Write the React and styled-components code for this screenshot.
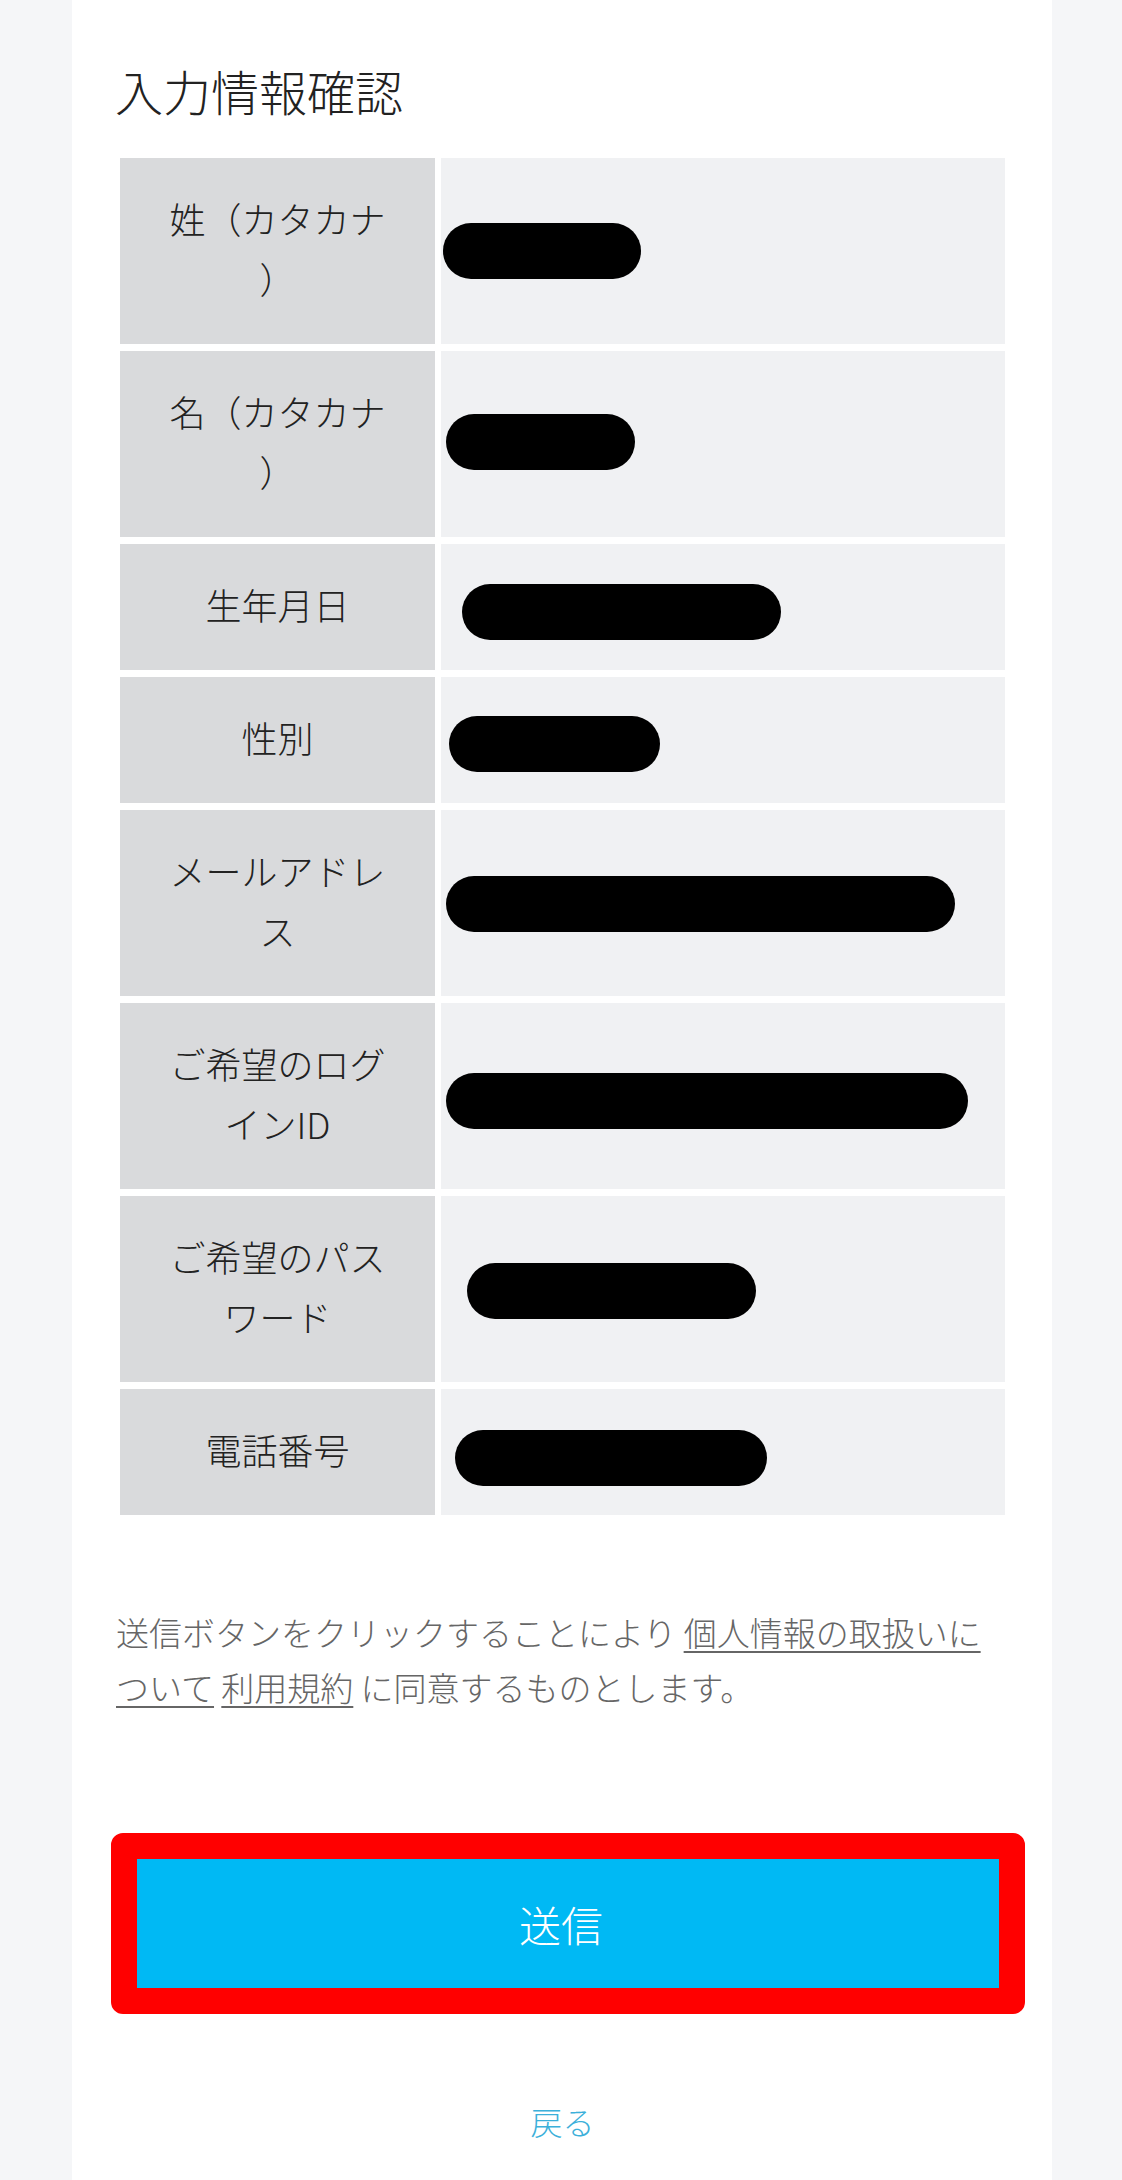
import React from 'react'
import styled, {createGlobalStyle} from 'styled-components'

const GlobalStyle = createGlobalStyle`
    html, body {
        margin: 0;
        padding: 0;
        background: #f5f6f8;
    }
    body {
        font-family: "Noto Sans CJK JP", "Noto Sans", sans-serif;
        font-weight: 300;
        color: #222;
        text-spacing-trim: space-all;
    }
`

const rows = [
    {label: '姓（カタカナ）', offset: 2, width: 198, dy: 0},
    {label: '名（カタカナ）', offset: 5, width: 189, dy: -2},
    {label: '生年月日', offset: 21, width: 319, dy: 5},
    {label: '性別', offset: 8, width: 211, dy: 4},
    {label: 'メールアドレス', offset: 5, width: 509, dy: 1},
    {label: 'ご希望のログインID', offset: 5, width: 522, dy: 5},
    {label: 'ご希望のパスワード', offset: 26, width: 289, dy: 2},
    {label: '電話番号', offset: 14, width: 312, dy: 6},
]

export default function App() {
    return (
        <>
            <GlobalStyle/>
            <Page>
                <Panel>
                    <Title>入力情報確認</Title>
                    <InfoTable>
                        {rows.map(row =>
                            <React.Fragment key={row.label}>
                                <Label>{row.label}</Label>
                                <Value>
                                    <Redacted $offset={row.offset} $w={row.width} $dy={row.dy}/>
                                </Value>
                            </React.Fragment>
                        )}
                    </InfoTable>

                    <Agreement>
                        送信ボタンをクリックすることにより <TextLink href="#">個人情報の取扱いについて</TextLink>{' '}
                        <TextLink href="#">利用規約</TextLink> に同意するものとします。
                    </Agreement>

                    <ButtonFrame>
                        <SubmitButton type="button">送信</SubmitButton>
                    </ButtonFrame>

                    <BackLink href="#">戻る</BackLink>
                </Panel>
            </Page>
        </>
    )
}

const Page = styled.div`
    min-height: 2180px;
    background: #f5f6f8;
    display: flex;
`

const Panel = styled.main`
    width: 980px;
    margin-left: 72px;
    background: #fff;
    padding: 0 47px 0 48px;
    box-sizing: border-box;
    display: flex;
    flex-direction: column;
`

const Title = styled.h1`
    margin: 56px 0 34px -5px;
    font-size: 48px;
    line-height: 68px;
    font-weight: 300;
    color: #222;
`

const InfoTable = styled.div`
    display: grid;
    grid-template-columns: 315px 1fr;
    column-gap: 6px;
    row-gap: 7px;
`

const Label = styled.div`
    background: #d9dadc;
    padding: 30px 40px 36px;
    font-size: 36px;
    line-height: 60px;
    text-align: center;
    color: #222;
    line-break: anywhere;
    text-spacing-trim: space-all;
`

const Value = styled.div`
    background: #f0f1f3;
    display: flex;
    align-items: center;
`

const Redacted = styled.span`
    display: block;
    width: ${p => p.$w}px;
    height: 56px;
    margin-left: ${p => p.$offset}px;
    margin-top: ${p => p.$dy * 2}px;
    border-radius: 28px;
    background: #000;
`

const Agreement = styled.p`
    margin: 90px 0 0 -4px;
    font-size: 33px;
    line-height: 55px;
    color: #666;
`

const TextLink = styled.a`
    color: #666;
    text-decoration: underline;
    text-underline-offset: 5px;
    text-decoration-thickness: 2px;
`

const ButtonFrame = styled.div`
    margin: 118px -20px 0 -9px;
    border: 26px solid #ff0000;
    border-radius: 12px;
    display: flex;
`

const SubmitButton = styled.button`
    flex: 1;
    height: 129px;
    padding: 0 14px 0 0;
    border: none;
    background: #00b9f4;
    color: #fff;
    font-family: "Noto Sans CJK JP", sans-serif;
    font-size: 42px;
    font-weight: 300;
    cursor: pointer;
`

const BackLink = styled.a`
    align-self: center;
    margin-top: 83px;
    font-size: 32px;
    line-height: 48px;
    color: #3cb0da;
    text-decoration: none;
`
